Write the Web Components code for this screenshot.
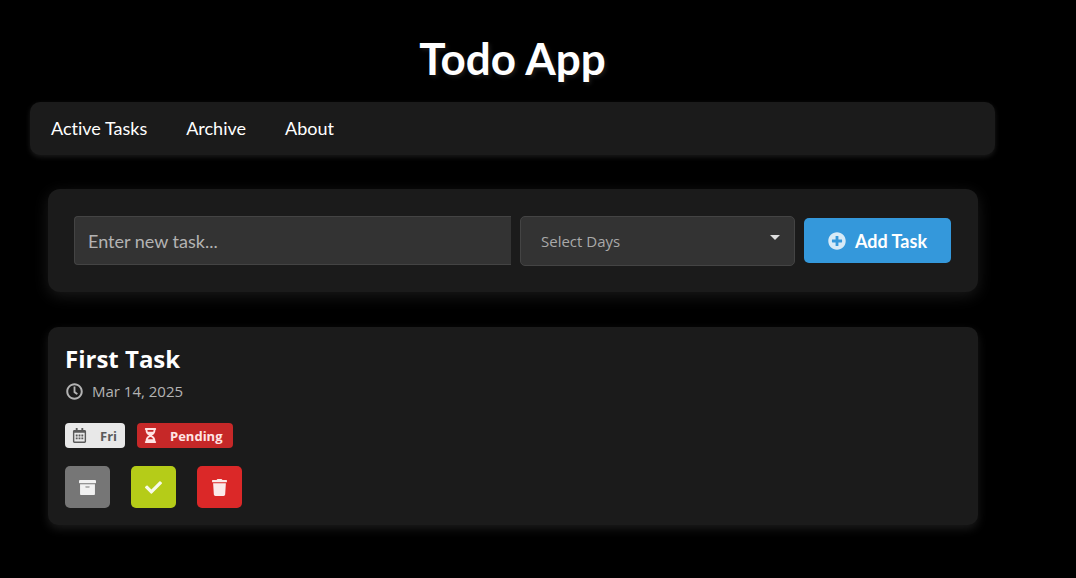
<!DOCTYPE html>
<html lang="en">
<head>
<meta charset="utf-8">
<meta name="viewport" content="width=device-width, initial-scale=1">
<title>Todo App</title>
<style>
  html { background: #000; }
  body { margin: 0; color: #fff; font-family: Lato, "Liberation Sans", sans-serif; font-size: 18px; font-variant-ligatures: none; }
</style>
</head>
<body>
<todo-app>
  <app-nav>
    <nav-link href="#active">Active Tasks</nav-link>
    <nav-link href="#archive">Archive</nav-link>
    <nav-link href="#about">About</nav-link>
  </app-nav>
  <task-form></task-form>
  <task-card>
    <span slot="title">First Task</span>
    <span slot="date">Mar 14, 2025</span>
    <status-label slot="labels" icon="calendar">Fri</status-label>
    <status-label slot="labels" icon="hourglass" kind="pending">Pending</status-label>
    <icon-button slot="actions" icon="archive" label="Archive task"></icon-button>
    <icon-button slot="actions" icon="check" kind="done" label="Complete task"></icon-button>
    <icon-button slot="actions" icon="trash" kind="delete" label="Delete task"></icon-button>
  </task-card>
</todo-app>
<script>
const ICONS = {
  plus: '<path d="M256 8C119 8 8 119 8 256s111 248 248 248 248-111 248-248S393 8 256 8zm144 276c0 6.600-5.400 12-12 12h-92v92c0 6.600-5.400 12-12 12h-56c-6.600 0-12-5.400-12-12v-92h-92c-6.600 0-12-5.400-12-12v-56c0-6.600 5.400-12 12-12h92v-92c0-6.600 5.400-12 12-12h56c6.600 0 12 5.400 12 12v92h92c6.600 0 12 5.400 12 12v56z"/>',
  clock: '<path d="M256 8C119 8 8 119 8 256s111 248 248 248 248-111 248-248S393 8 256 8zm0 436c-104 0-188-84-188-188S152 68 256 68s188 84 188 188-84 188-188 188zm61.800-92.400l-84.900-61.700c-3.100-2.300-4.900-5.900-4.900-9.700V116c0-6.600 5.400-12 12-12h32c6.600 0 12 5.400 12 12v141.700l66.800 48.600c5.400 3.900 6.500 11.400 2.600 16.800L334.600 349c-3.900 5.300-11.400 6.500-16.800 2.600z"/>',
  calendar: '<path transform="translate(32)" d="M148 288h-40c-6.600 0-12-5.400-12-12v-40c0-6.600 5.400-12 12-12h40c6.600 0 12 5.400 12 12v40c0 6.600-5.400 12-12 12zm108-12v-40c0-6.600-5.400-12-12-12h-40c-6.600 0-12 5.400-12 12v40c0 6.600 5.400 12 12 12h40c6.600 0 12-5.400 12-12zm96 0v-40c0-6.600-5.400-12-12-12h-40c-6.600 0-12 5.400-12 12v40c0 6.600 5.400 12 12 12h40c6.600 0 12-5.400 12-12zm-96 96v-40c0-6.600-5.400-12-12-12h-40c-6.600 0-12 5.400-12 12v40c0 6.600 5.400 12 12 12h40c6.600 0 12-5.400 12-12zm-96 0v-40c0-6.600-5.400-12-12-12h-40c-6.600 0-12 5.400-12 12v40c0 6.600 5.400 12 12 12h40c6.600 0 12-5.400 12-12zm192 0v-40c0-6.600-5.400-12-12-12h-40c-6.600 0-12 5.400-12 12v40c0 6.600 5.400 12 12 12h40c6.600 0 12-5.400 12-12zm96-260v352c0 26.500-21.500 48-48 48H48c-26.500 0-48-21.500-48-48V112c0-26.500 21.500-48 48-48h48V12c0-6.600 5.400-12 12-12h40c6.600 0 12 5.400 12 12v52h128V12c0-6.600 5.400-12 12-12h40c6.600 0 12 5.400 12 12v52h48c26.500 0 48 21.500 48 48zm-48 346V160H48v298c0 3.300 2.700 6 6 6h340c3.300 0 6-2.700 6-6z"/>',
  hourglass: '<path transform="translate(64)" d="M360 0H24C10.745 0 0 10.745 0 24v16c0 13.255 10.745 24 24 24 0 90.965 51.016 167.734 120.842 192C75.016 280.266 24 357.035 24 448c-13.255 0-24 10.745-24 24v16c0 13.255 10.745 24 24 24h336c13.255 0 24-10.745 24-24v-16c0-13.255-10.745-24-24-24 0-90.965-51.016-167.734-120.842-192C308.984 231.734 360 154.965 360 64c13.255 0 24-10.745 24-24V24c0-13.255-10.745-24-24-24zm-75.078 384H99.080c17.059-46.797 52.096-80 92.920-80 40.821 0 75.862 33.196 92.922 80zm.019-256H99.078C91.988 108.548 88 86.748 88 64h208c0 22.805-3.987 44.587-11.059 64z"/>',
  archive: '<path d="M32 448c0 17.700 14.300 32 32 32h384c17.700 0 32-14.300 32-32V160H32v288zm160-212c0-6.600 5.400-12 12-12h104c6.600 0 12 5.400 12 12v8c0 6.600-5.400 12-12 12H204c-6.600 0-12-5.400-12-12v-8zM480 32H32C14.300 32 0 46.300 0 64v48c0 8.800 7.200 16 16 16h480c8.800 0 16-7.200 16-16V64c0-17.700-14.300-32-32-32z"/>',
  check: '<path d="M173.898 439.404l-166.400-166.400c-9.997-9.997-9.997-26.206 0-36.204l36.203-36.204c9.997-9.998 26.207-9.998 36.204 0L192 312.690 432.095 72.596c9.997-9.997 26.207-9.997 36.204 0l36.203 36.204c9.997 9.997 9.997 26.206 0 36.204l-294.400 294.401c-9.998 9.997-26.207 9.997-36.204-.001z"/>',
  trash: '<path transform="translate(32)" d="M432 32H312l-9.400-18.700A24 24 0 0 0 281.100 0H166.800a23.720 23.720 0 0 0-21.400 13.300L136 32H16A16 16 0 0 0 0 48v32a16 16 0 0 0 16 16h416a16 16 0 0 0 16-16V48a16 16 0 0 0-16-16zM53.200 467a48 48 0 0 0 47.900 45h245.800a48 48 0 0 0 47.900-45L416 128H32z"/>'
};
const icon = name => `<svg viewBox="0 0 512 512" fill="currentColor" aria-hidden="true">${ICONS[name]}</svg>`;
const define = (name, render) => customElements.define(name, class extends HTMLElement {
  connectedCallback() {
    if (!this.shadowRoot) this.attachShadow({ mode: 'open' }).innerHTML = render(this);
  }
});

define('todo-app', () => `<style>
  :host { display: block; padding: 31px 81px 53px 30px; }
  h1 { margin: 0 0 17px; text-align: center; font-size: 44px; line-height: 54px; font-weight: 700;
       text-shadow: 2px 2px 4px rgba(255,255,255,.1); }
  main { display: flex; flex-direction: column; }
</style><h1>Todo App</h1><main><slot></slot></main>`);

define('app-nav', () => `<style>
  :host { display: block; }
  nav { display: flex; background: #1b1b1b; border-radius: 10px; box-shadow: 0 2px 5px rgba(255,255,255,.1); }
</style><nav aria-label="Main"><slot></slot></nav>`);

define('nav-link', () => `<style>
  :host { display: flex; }
  a { padding: 14px 18px 15px 21px; color: #fff; text-decoration: none; font-size: 18px; line-height: 24px; }
</style><a><slot></slot></a>`);
document.querySelectorAll('nav-link').forEach(el => {
  el.shadowRoot.querySelector('a').href = el.getAttribute('href');
});

define('task-form', () => `<style>
  :host { display: block; margin: 34px 17px 0 18px; }
  form { display: flex; align-items: flex-start; gap: 9px; padding: 27px 27px 26px 26px; background: #1b1b1b;
         border-radius: 12px; box-shadow: 0 4px 15px rgba(255,255,255,.1); }
  input, select, button { box-sizing: border-box; margin: 0; outline: none; }
  input { flex: 1; min-width: 0; height: 49px; padding: 0 13px; color: #fff; background: #333; border: 1px solid #444;
          border-right: 0; border-radius: 4px 0 0 4px; font: 18px/24px Lato, sans-serif; font-variant-ligatures: none; }
  input::placeholder { color: #b3b3b3; opacity: 1; }
  .days { display: grid; width: 275px; }
  .days > * { grid-area: 1 / 1; }
  select { appearance: none; width: 100%; height: 50px; padding: 0 40px 0 20px; color: #a9a9a9; background: #333;
           border: 1px solid #444; border-radius: 5px; font: 15px/20px "Open Sans", "Noto Sans", sans-serif; }
  .caret { justify-self: end; width: 10px; height: 5px; margin: 19px 15px 0 0; fill: #dedede; pointer-events: none; }
  button { display: flex; align-items: center; justify-content: center; gap: 9px; width: 147px; height: 45px; margin-top: 2px; padding: 0;
           color: #fff; background: #3498db; border: 0; border-radius: 5px; font: 700 18px/24px Lato, sans-serif; }
  button svg { width: 18px; height: 18px; opacity: .8; }
</style><form>
  <input type="text" placeholder="Enter new task..." aria-label="New task">
  <div class="days"><select aria-label="Select Days"><option>Select Days</option></select>
    <svg class="caret" viewBox="0 0 10 5" aria-hidden="true"><path d="M0 0h10L5 5z"/></svg></div>
  <button type="button">${icon('plus')}<span>Add Task</span></button>
</form>`);

define('task-card', () => `<style>
  :host { display: block; margin: 35px 17px 0 18px; }
  article { padding: 16px 17px 17px; background: #1b1b1b; border-radius: 10px; box-shadow: 0 4px 10px rgba(255,255,255,.1);
            font-family: "Open Sans", "Noto Sans", sans-serif; }
  h2 { margin: 0; font-size: 24px; line-height: 32px; font-weight: 700; }
  .date { display: flex; align-items: center; gap: 9px; margin-top: 6px; padding-left: 1px; color: #b3b3b3; font-size: 15px; line-height: 20px; }
  .date svg { width: 17px; height: 17px; }
  .labels { display: flex; gap: 12px; margin-top: 22px; }
  .actions { display: flex; gap: 21px; margin-top: 18px; }
</style><article>
  <h2><slot name="title"></slot></h2>
  <div class="date">${icon('clock')}<slot name="date"></slot></div>
  <div class="labels"><slot name="labels"></slot></div>
  <div class="actions"><slot name="actions"></slot></div>
</article>`);

define('status-label', el => `<style>
  :host { display: flex; align-items: center; gap: 13px; height: 25px; padding: 0 8px 0 7px; color: #5a5a5a; background: #e8e8e8;
          border-radius: 4px; font: 700 13px/20px "Open Sans", "Noto Sans", sans-serif; }
  :host([kind="pending"]) { gap: 12px; padding: 0 10px 0 6px; color: #ffe4e4; background: #c62828; }
  svg { width: 15px; height: 15px; }
</style>${icon(el.getAttribute('icon'))}<span><slot></slot></span>`);

define('icon-button', el => `<style>
  :host { display: block; --fill: #767676; }
  :host([kind="done"]) { --fill: #b5cc18; }
  :host([kind="delete"]) { --fill: #db2828; }
  button { display: grid; place-items: center; width: 45px; height: 42px; padding: 0; color: #fff; background: var(--fill);
           border: 0; border-radius: 5px; }
  svg { width: 17px; height: 17px; opacity: .9; }
</style><button type="button" aria-label="${el.getAttribute('label')}">${icon(el.getAttribute('icon'))}</button>`);
</script>
</body>
</html>
